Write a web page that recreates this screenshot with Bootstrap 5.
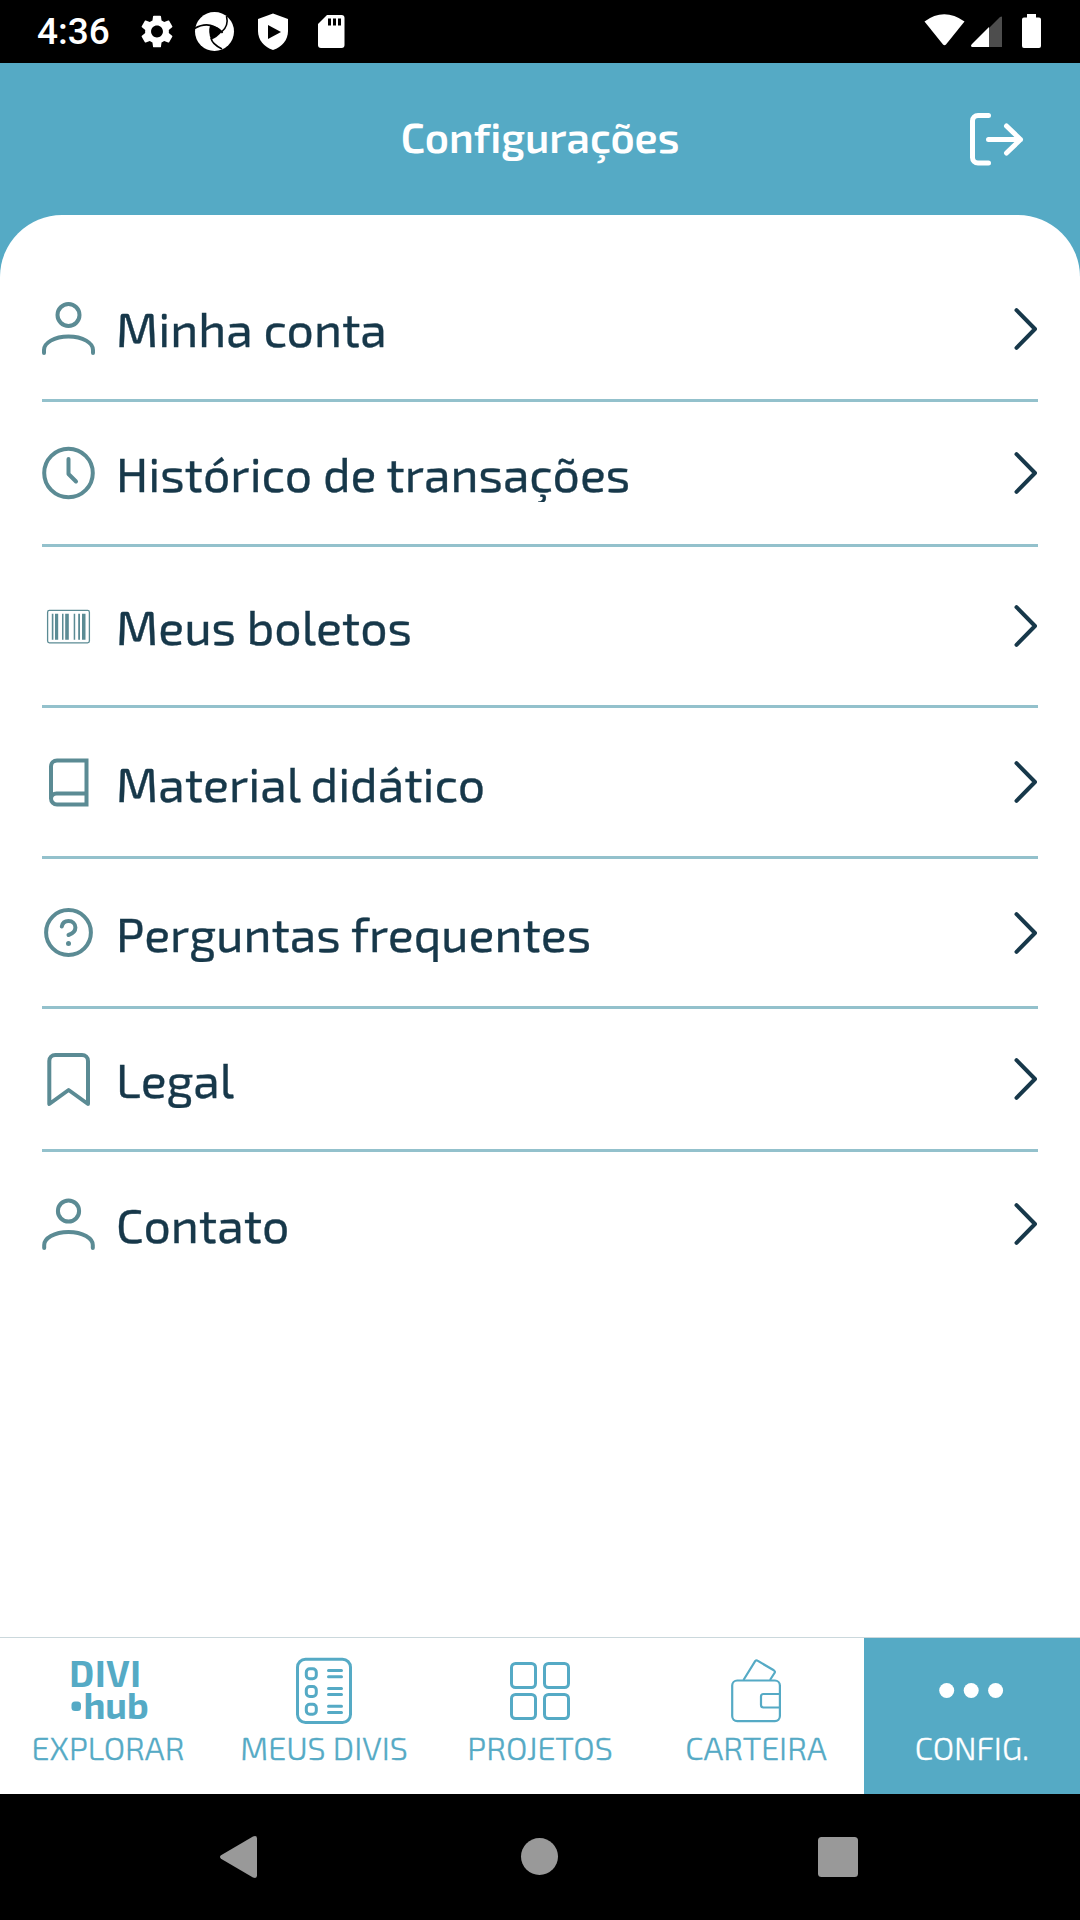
<!DOCTYPE html>
<html lang="pt-BR">
<head>
<meta charset="utf-8">
<meta name="viewport" content="width=device-width, initial-scale=1">
<title>Configurações</title>
<link href="https://cdn.jsdelivr.net/npm/bootstrap@5.3.0/dist/css/bootstrap.min.css" rel="stylesheet">
<style>
:root{--teal:#55aac5;--ink:#17384a;--rule:#93c1cc;--icon:#5b8b94}
body{font-family:"Exo 2",Roboto,"Noto Sans",sans-serif;font-variant-ligatures:none;height:1920px;overflow:hidden}
svg{display:block;flex:none;overflow:visible}
.statusbar{height:63px;padding:0 39px 0 37px}
.clock{font:500 37px/66px Roboto,sans-serif;width:104px}
.topbar{height:152px;background:var(--teal);padding-bottom:6px}
.topbar h1{font-size:41.7px;font-weight:600;line-height:60px}
.logout{right:57px;top:50px}
.backdrop{background:var(--teal)}
.sheet{border-radius:62px 62px 0 0;padding:43px 42px 0}
.item{border-bottom:3px solid var(--rule);color:var(--ink)}
.item:last-child{border-bottom:0}
.item .ico{width:53px;margin-right:21px;color:var(--icon)}
.item .txt{font-size:48.2px;font-weight:400;-webkit-text-stroke:.35px currentColor;line-height:58px;white-space:nowrap;overflow:hidden}
.h1r{height:144px}.h2r{height:145px}.h3r{height:161px}.h4r{height:151px}.h5r{height:150px}.h6r{height:143px}
.h4r .txt{padding-top:2px}
.h1r:first-child .txt{margin-bottom:1px}
.tabs{height:157px;border-top:1px solid #cbd8dc}
.tab-cell{color:var(--teal)}
.tab-cell.on{background:var(--teal);color:#fff}
.tab-cell svg{margin-top:15px}
.tab-cell .lbl{font-size:32.2px;line-height:36px;font-weight:300;-webkit-text-stroke:.35px currentColor;margin-top:4px;white-space:nowrap}
.sysnav{height:126px}
</style>
<script src="https://cdn.jsdelivr.net/npm/bootstrap@5.3.0/dist/js/bootstrap.bundle.min.js"></script>
</head>
<body class="d-flex flex-column bg-white m-0">
<div class="statusbar d-flex align-items-center bg-black text-white">
  <div class="clock">4:36</div>
  <svg width="210" height="63" viewBox="141 0 210 63" fill="#fff">
    <path transform="translate(137.200,11.700) scale(1.65)" d="M19.14 12.94c.04-.3.06-.61.06-.94 0-.32-.02-.64-.07-.94l2.03-1.58c.18-.14.23-.41.12-.61l-1.92-3.32c-.12-.22-.37-.29-.59-.22l-2.39.96c-.5-.38-1.03-.7-1.62-.94l-.36-2.54c-.04-.24-.24-.41-.48-.41h-3.84c-.24 0-.43.17-.47.41l-.36 2.54c-.59.24-1.13.57-1.62.94l-2.39-.96c-.22-.08-.47 0-.59.22L2.74 8.87c-.12.21-.08.47.12.61l2.03 1.58c-.05.3-.09.63-.09.94s.02.64.07.94l-2.03 1.58c-.18.14-.23.41-.12.61l1.92 3.32c.12.22.37.29.59.22l2.39-.96c.5.38 1.03.7 1.62.94l.36 2.54c.05.24.24.41.48.41h3.84c.24 0 .44-.17.47-.41l.36-2.54c.59-.24 1.13-.56 1.62-.94l2.39.96c.22.08.47 0 .59-.22l1.92-3.32c.12-.22.07-.47-.12-.61l-2.01-1.58zM12 15.6c-1.98 0-3.6-1.62-3.6-3.6s1.62-3.6 3.6-3.6 3.6 1.62 3.6 3.6-1.62 3.6-3.6 3.6z"/>
    <circle cx="214.500" cy="31.500" r="19.500"/>
    <path fill="#000" d="M210 25.500Q217 26 222 31.500Q217 38 211 39.500Q208 32 210 25.500Z"/>
    <g fill="none" stroke="#000" stroke-width="1.600"><path d="M194.500 28.500Q205 22.500 214 26.500Q220 29 222.500 33"/><path d="M226.500 16Q229 26 221.500 32"/><path d="M211 38Q212 44 222 49"/></g>
    <path d="M273 13.500L288 19v12c0 9-6 16-15 19c-9-3-15-10-15-19V19z"/><path fill="#000" d="M268 25v14l13-7z"/>
    <path d="M327 15h14.500a3 3 0 0 1 3 3v27a3 3 0 0 1-3 3H321a3 3 0 0 1-3-3V24z"/><path fill="#000" d="M328 18.500h3v7h-3zM333 18.500h3v7h-3zM338 18.500h3v7h-3z"/>
  </svg>
  <svg class="ms-auto" width="117" height="63" viewBox="924 0 117 63" fill="#fff">
    <path d="M924.500 21.500Q944 7 964.500 21.500L946 44.500q-1.500 1.600-3 0z"/>
    <path fill="#4d4d4d" d="M1002 17v30h-13V28l11-11q2-1 2 0z"/><path d="M989 27v20h-17q-2-1 0-3z"/>
    <path d="M1027 14h9v3.500h3a2 2 0 0 1 2 2V46a2 2 0 0 1-2 2h-15a2 2 0 0 1-2-2V19.500a2 2 0 0 1 2-2h3z"/>
  </svg>
</div>
<header class="topbar position-relative d-flex align-items-center justify-content-center text-white">
  <h1 class="m-0">Configurações</h1>
  <svg class="logout position-absolute" width="53" height="53" viewBox="970 113 53 53" fill="none" stroke="#fff" stroke-width="5" stroke-linecap="round" stroke-linejoin="round"><path d="M988.500 115.500H978a5.500 5.500 0 0 0-5.500 5.500V157.500a5.500 5.500 0 0 0 5.500 5.500h10.500M988.500 139.500H1020.500M1006.500 126l14 13.500l-14 13.500"/></svg>
</header>
<div class="backdrop flex-grow-1 d-flex flex-column">
<main class="sheet bg-white flex-grow-1 d-flex flex-column">
  <div class="item h1r d-flex align-items-center">
    <svg class="ico" width="53" height="53" viewBox="0 0 53 53" fill="none" stroke="currentColor" stroke-width="4" stroke-linecap="round"><circle cx="26.500" cy="13" r="11"/><path d="M2 51v-3C2 41 12 34.500 26.500 34.500S51 41 51 48v3"/></svg>
    <span class="txt">Minha conta</span>
    <svg class="ms-auto" width="24" height="42" viewBox="1 0 24 42" fill="none" stroke="currentColor" stroke-width="4" stroke-linecap="round" stroke-linejoin="round"><path d="M3.500 2.200L22 21L3.500 39.800"/></svg>
  </div>
  <div class="item h2r d-flex align-items-center">
    <svg class="ico" width="53" height="53" viewBox="0 0 53 53" fill="none" stroke="currentColor" stroke-width="4" stroke-linecap="round" stroke-linejoin="round"><circle cx="26.500" cy="26" r="24.300"/><path d="M26.500 12V27L34 34.500"/></svg>
    <span class="txt">Histórico de transações</span>
    <svg class="ms-auto" width="24" height="42" viewBox="1 0 24 42" fill="none" stroke="currentColor" stroke-width="4" stroke-linecap="round" stroke-linejoin="round"><path d="M3.500 2.200L22 21L3.500 39.800"/></svg>
  </div>
  <div class="item h3r d-flex align-items-center">
    <svg class="ico" width="53" height="53" viewBox="42 599.500 53 53" fill="currentColor"><rect x="47.600" y="609.900" width="41.800" height="32.400" rx="1.800" fill="none" stroke="currentColor" stroke-width="1.300"/><path d="M51.800 613.200h1.600v26h-1.600zM55 613.200h3.200v26H55zM62 613.200h1.500v26H62zM65.200 613.200h3.600v26h-3.600zM73.700 613.200h1.500v26h-1.500zM78.200 613.200h1.800v26h-1.800zM82 613.200h3.500v26H82z"/></svg>
    <span class="txt">Meus boletos</span>
    <svg class="ms-auto" width="24" height="42" viewBox="1 0 24 42" fill="none" stroke="currentColor" stroke-width="4" stroke-linecap="round" stroke-linejoin="round"><path d="M3.500 2.200L22 21L3.500 39.800"/></svg>
  </div>
  <div class="item h4r d-flex align-items-center">
    <svg class="ico" width="53" height="53" viewBox="42 756 53 53" fill="none" stroke="currentColor" stroke-width="4"><path d="M86.500 760.500H57a6 6 0 0 0-6 6V798.500a6 6 0 0 0 6 6H86.500ZM51 799a5.500 5.500 0 0 1 5.500-5.500H86.500"/></svg>
    <span class="txt">Material didático</span>
    <svg class="ms-auto" width="24" height="42" viewBox="1 0 24 42" fill="none" stroke="currentColor" stroke-width="4" stroke-linecap="round" stroke-linejoin="round"><path d="M3.500 2.200L22 21L3.500 39.800"/></svg>
  </div>
  <div class="item h5r d-flex align-items-center">
    <svg class="ico" width="53" height="53" viewBox="42 906 53 53" fill="none" stroke="currentColor" stroke-width="4" stroke-linecap="round"><circle cx="68.500" cy="932.500" r="22.400"/><path d="M61.800 926.500C62.500 922.500 65.500 921 68.500 921C72.500 921 75.400 923.800 75.400 927.500C75.400 932 71.500 934 68.500 935"/><circle cx="68.500" cy="943.500" r="2.500" fill="currentColor" stroke="none"/></svg>
    <span class="txt">Perguntas frequentes</span>
    <svg class="ms-auto" width="24" height="42" viewBox="1 0 24 42" fill="none" stroke="currentColor" stroke-width="4" stroke-linecap="round" stroke-linejoin="round"><path d="M3.500 2.200L22 21L3.500 39.800"/></svg>
  </div>
  <div class="item h6r d-flex align-items-center">
    <svg class="ico" width="53" height="53" viewBox="42 1053 53 53" fill="none" stroke="currentColor" stroke-width="4" stroke-linejoin="round"><path d="M49.300 1104V1061a6 6 0 0 1 6-6H82a6 6 0 0 1 6 6V1104L68.600 1090Z"/></svg>
    <span class="txt">Legal</span>
    <svg class="ms-auto" width="24" height="42" viewBox="1 0 24 42" fill="none" stroke="currentColor" stroke-width="4" stroke-linecap="round" stroke-linejoin="round"><path d="M3.500 2.200L22 21L3.500 39.800"/></svg>
  </div>
  <div class="item h1r d-flex align-items-center">
    <svg class="ico" width="53" height="53" viewBox="0 0 53 53" fill="none" stroke="currentColor" stroke-width="4" stroke-linecap="round"><circle cx="26.500" cy="13" r="10.600"/><path d="M2.200 50v-3C2.200 40.500 12 34 26.500 34S50.800 40.500 50.800 47v3"/></svg>
    <span class="txt">Contato</span>
    <svg class="ms-auto" width="24" height="42" viewBox="1 0 24 42" fill="none" stroke="currentColor" stroke-width="4" stroke-linecap="round" stroke-linejoin="round"><path d="M3.500 2.200L22 21L3.500 39.800"/></svg>
  </div>
</main>
</div>
<nav class="tabs d-flex bg-white">
  <div class="tab-cell col d-flex flex-column align-items-center">
    <svg width="76" height="72" viewBox="70 1653 76 72" fill="currentColor" font-family="'Exo 2',sans-serif" font-weight="700" font-size="36.500"><text x="69.300" y="1687.300" letter-spacing=".7">DIVI</text><text x="83.400" y="1718.500">hub</text><rect x="71.500" y="1701.500" width="9.500" height="9.500" rx="3.500"/></svg>
    <span class="lbl">EXPLORAR</span>
  </div>
  <div class="tab-cell col d-flex flex-column align-items-center">
    <svg width="56" height="72" viewBox="296 1653 56 72" fill="none" stroke="currentColor" stroke-width="3"><rect x="297.500" y="1659.300" width="53" height="63.200" rx="8"/><rect x="306.300" y="1668.700" width="10" height="10" rx="3.500"/><rect x="306.300" y="1686.500" width="10" height="10" rx="3.500"/><rect x="306.300" y="1704.300" width="10" height="10" rx="3.500"/><path stroke-linecap="round" d="M328.500 1670.500h13M328.500 1676.800h13M328.500 1688.500h13M328.500 1694.500h13M328.500 1706.300h13M328.500 1712.500h13"/></svg>
    <span class="lbl">MEUS DIVIS</span>
  </div>
  <div class="tab-cell col d-flex flex-column align-items-center">
    <svg width="60" height="72" viewBox="510 1653 60 72" fill="none" stroke="currentColor" stroke-width="3"><rect x="511.500" y="1663.500" width="24" height="24" rx="4"/><rect x="544.500" y="1663.500" width="24" height="24" rx="4"/><rect x="511.500" y="1694.500" width="24" height="24" rx="4"/><rect x="544.500" y="1694.500" width="24" height="24" rx="4"/></svg>
    <span class="lbl">PROJETOS</span>
  </div>
  <div class="tab-cell col d-flex flex-column align-items-center">
    <svg width="50" height="72" viewBox="731 1653 50 72" fill="none" stroke="currentColor" stroke-width="2.200"><rect x="732.200" y="1680.500" width="47.700" height="40.600" rx="5"/><path d="M780 1694H763.500a2.500 2.500 0 0 0-2.500 2.500V1705a2.500 2.500 0 0 0 2.500 2.500H780M743.500 1680L755.300 1661Q756.300 1659.800 757.500 1660.700L773.800 1670.300Q775.600 1671.500 774.500 1673L770 1680"/></svg>
    <span class="lbl">CARTEIRA</span>
  </div>
  <div class="tab-cell on col d-flex flex-column align-items-center">
    <svg width="64" height="72" viewBox="940 1653 64 72" fill="currentColor"><circle cx="946.700" cy="1690.500" r="7.500"/><circle cx="971.200" cy="1690.500" r="7.500"/><circle cx="995.600" cy="1690.500" r="7.500"/></svg>
    <span class="lbl">CONFIG.</span>
  </div>
</nav>
<div class="sysnav bg-black">
  <svg width="1080" height="126" viewBox="0 1794 1080 126" fill="#999"><path d="M221 1855.300L253 1836.500Q257 1835 257 1838.500V1875.500Q257 1879 253 1877.500L221 1858.700Q219 1857 221 1855.300Z"/><circle cx="539.500" cy="1856.500" r="18.500"/><rect x="818" y="1837" width="40" height="40" rx="3.500"/></svg>
</div>
</body>
</html>
